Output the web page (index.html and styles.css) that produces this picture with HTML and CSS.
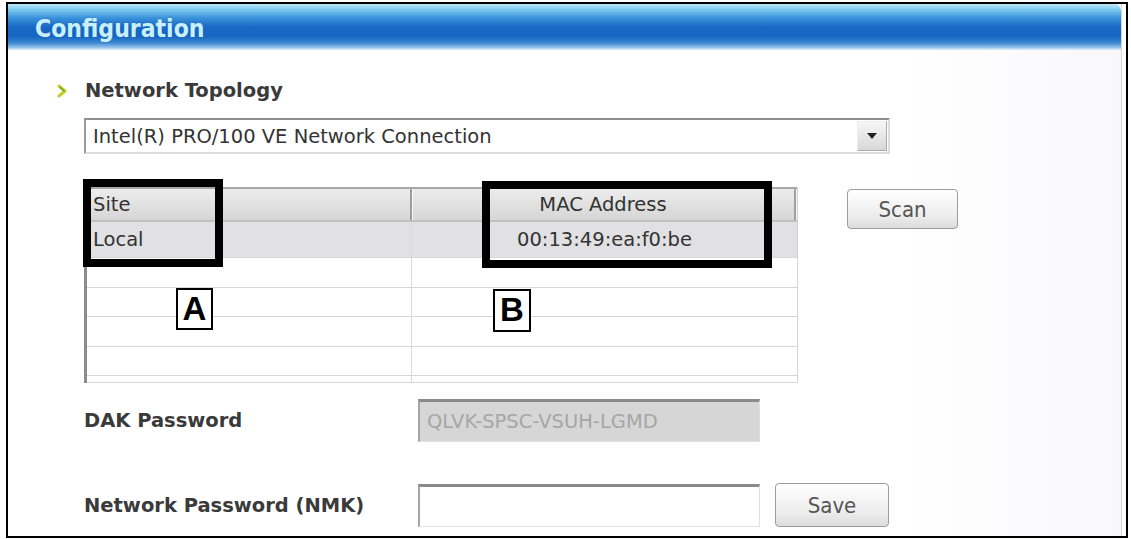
FILE: index.html
```html
<!DOCTYPE html>
<html>
<head>
<meta charset="utf-8">
<link rel="stylesheet" href="styles.css">
</head>
<body>
<div class="frame">
  <div class="panel">
    <div class="titlebar"><span class="title">Configuration</span></div>
    <div class="content">
      <div class="section-head">
        <svg class="bullet" width="11" height="14" viewBox="0 0 11 14"><path d="M2 2 L8 7 L2 12" fill="none" stroke="#c4cc2a" stroke-width="3" stroke-linecap="round" stroke-linejoin="round"/><path d="M3 3.5 L7 7" stroke="#6aa62a" stroke-width="1.4" stroke-linecap="round"/></svg>
        <span>Network Topology</span>
      </div>
      <div class="select">
        <span class="select-text">Intel(R) PRO/100 VE Network Connection</span>
        <span class="select-btn"><svg width="10" height="6" viewBox="0 0 10 6"><path d="M0 0 H10 L5 6 Z" fill="#222"/></svg></span>
      </div>
      <div class="table-row">
        <div class="table-wrap">
          <div class="grid">
            <div class="row head"><div class="cell c1">Site</div><div class="cell c2">MAC Address</div><div class="cell c3"></div></div>
            <div class="row sel"><div class="cell c1">Local</div><div class="cell c2">00:13:49:ea:f0:be</div></div>
            <div class="row empty"><div class="cell c1"></div><div class="cell c2"></div></div>
            <div class="row empty"><div class="cell c1"></div><div class="cell c2"></div></div>
            <div class="row empty"><div class="cell c1"></div><div class="cell c2"></div></div>
            <div class="row empty"><div class="cell c1"></div><div class="cell c2"></div></div>
            <div class="row tail"><div class="cell c1"></div><div class="cell c2"></div></div>
          </div>
          <div class="mark mark-a"></div>
          <div class="mark mark-b"></div>
          <div class="tag tag-a">A</div>
          <div class="tag tag-b">B</div>
        </div>
        <div class="btn scan">Scan</div>
      </div>
      <div class="field-row dak">
        <div class="label">DAK Password</div>
        <div class="input disabled">QLVK-SPSC-VSUH-LGMD</div>
      </div>
      <div class="field-row nmk">
        <div class="label">Network Password (NMK)</div>
        <div class="input"></div>
        <div class="btn save">Save</div>
      </div>
    </div>
  </div>
</div>
</body>
</html>
```

FILE: styles.css
```css
html, body {
  margin: 0;
  padding: 0;
  background: #fff;
}
body {
  font-family: "DejaVu Sans", Verdana, sans-serif;
  color: #333;
}
.frame {
  margin: 2px 0 0 6px;
  width: 1118px;
  height: 532px;
  border: 2px solid #000;
  background: #fff;
}
.panel {
  width: 1113px;
  height: 532px;
  border-right: 1px solid #d6d6da;
  background: linear-gradient(to right, #fff 0%, #fff 80%, #f8f8fb 100%);
}
.titlebar {
  height: 46px;
  box-sizing: border-box;
  padding-top: 4px;
  border-top-right-radius: 7px;
  padding-left: 27px;
  background: linear-gradient(to bottom, #bfe8f8 0%, #7ccbef 12%, #3b93db 30%, #1968c4 50%, #1665c2 70%, #3a86d0 84%, #8fbfe8 94%, #e4f0fa 100%);
  display: flex;
  align-items: center;
}
.title {
  font-family: "DejaVu Sans Condensed", "DejaVu Sans", sans-serif;
  font-stretch: condensed;
  font-weight: bold;
  font-size: 24.5px;
  color: #c9f0ff;
  text-shadow: 0 0 2px rgba(40, 110, 190, 0.6);
  line-height: 28px;
}
.content {
  padding-left: 76px;
}
.section-head {
  margin-top: 29px;
  margin-left: -27px;
  height: 23px;
  display: flex;
  align-items: center;
  gap: 17px;
  font-weight: bold;
  font-size: 19.5px;
  color: #3a3a3a;
  line-height: 23px;
}
.bullet {
  flex: none;
}
.select {
  margin-top: 16px;
  width: 806px;
  height: 36px;
  box-sizing: border-box;
  border: 2px solid #dcdcdc;
  border-top-color: #8e8e8e;
  border-left-color: #9a9a9a;
  display: flex;
  align-items: center;
  justify-content: space-between;
  background: #fff;
}
.select-text {
  padding-left: 7px;
  font-size: 19.5px;
  color: #333;
  white-space: nowrap;
}
.select-btn {
  width: 30px;
  height: 30px;
  margin-right: 1px;
  box-sizing: border-box;
  border: 1px solid #aaa;
  border-top-color: #eee;
  border-left-color: #eee;
  background: linear-gradient(to bottom, #f6f6f6, #d8d8d8);
  display: flex;
  align-items: center;
  justify-content: center;
}
.table-row {
  margin-top: 33px;
  display: flex;
  align-items: flex-start;
}
.table-wrap {
  position: relative;
  width: 714px;
}
.grid {
  width: 714px;
  border-left: 3px solid #8c8c8c;
  border-right: 1px solid #d4d4d4;
  box-sizing: border-box;
}
.row {
  display: flex;
  box-sizing: border-box;
}
.cell {
  box-sizing: border-box;
  font-size: 19.5px;
  color: #333;
  white-space: nowrap;
  display: flex;
  align-items: center;
}
.c1 {
  width: 325px;
  padding-left: 6px;
  border-right: 1px solid #dadada;
}
.c2 {
  flex: 1;
  justify-content: center;
}
.row.head {
  height: 35px;
  background: linear-gradient(to bottom, #ececec, #d6d6d6);
  border-top: 2px solid #a8a8a8;
  border-bottom: 2px solid #c0c0c0;
  margin-left: -3px;
  padding-left: 3px;
}
.row.head .c1 {
  border-right: 2px solid #9c9c9c;
  box-shadow: 1px 0 0 #fafafa;
}
.row.head .c2 {
  border-right: 2px solid #a0a0a0;
}
.row.head .c3 {
  width: 1px;
  background: #f4f4f4;
}
.row.sel {
  height: 36px;
  background: #e1e1e4;
  border-bottom: 1px solid #d6d6d6;
}
.row.empty {
  height: 29.5px;
  border-bottom: 1px solid #d6d6d6;
}
.row.tail {
  height: 7px;
  border-bottom: 1px solid #d6d6d6;
}
.mark {
  position: absolute;
  border: 8px solid #000;
  box-sizing: border-box;
}
.mark-a {
  left: -1px;
  top: -8px;
  width: 140px;
  height: 88px;
}
.mark-b {
  left: 398px;
  top: -6px;
  width: 290px;
  height: 87px;
}
.tag {
  position: absolute;
  box-sizing: border-box;
  border: 2px solid #000;
  background: #fff;
  font-family: "Liberation Sans", Arial, sans-serif;
  font-weight: bold;
  font-size: 33px;
  line-height: 38px;
  color: #000;
  text-align: center;
}
.tag-a {
  left: 92px;
  top: 101px;
  width: 37px;
  height: 42px;
}
.tag-b {
  left: 409px;
  top: 102px;
  width: 38px;
  height: 43px;
}
.btn {
  box-sizing: border-box;
  border: 1px solid #9c9c9c;
  border-radius: 4px;
  background: linear-gradient(to bottom, #ffffff, #ececec 70%, #dcdcdc);
  font-family: "DejaVu Sans Condensed", "DejaVu Sans", sans-serif;
  font-stretch: condensed;
  font-size: 22px;
  color: #555;
  display: flex;
  align-items: center;
  justify-content: center;
}
.scan {
  margin-left: 49px;
  margin-top: 2px;
  width: 111px;
  height: 40px;
}
.field-row {
  display: flex;
  align-items: center;
}
.field-row.dak {
  margin-top: 16px;
}
.field-row.nmk {
  margin-top: 41px;
}
.label {
  width: 334px;
  font-weight: bold;
  font-size: 19.5px;
  color: #3a3a3a;
}
.input {
  width: 342px;
  height: 43px;
  box-sizing: border-box;
  border: 1px solid #e0e0e0;
  border-top: 3px solid #8a8a8a;
  border-left: 2px solid #a4a4a4;
  background: #fff;
  font-size: 19.5px;
  padding-left: 7px;
  display: flex;
  align-items: center;
  white-space: nowrap;
}
.input.disabled {
  background: #d6d6d6;
  color: #a6a6a6;
}
.save {
  margin-left: 15px;
  width: 114px;
  height: 44px;
}
```
